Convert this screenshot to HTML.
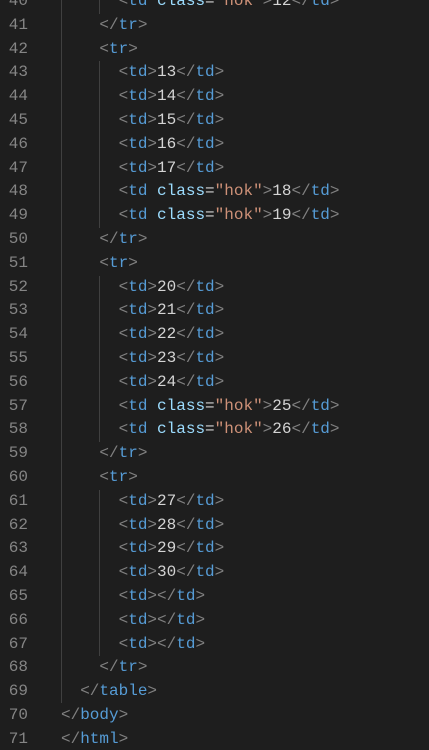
<!DOCTYPE html>
<html><head><meta charset="utf-8"><style>
html,body{margin:0;padding:0;background:#1e1e1e;width:429px;height:750px;overflow:hidden;position:relative}
.l{position:absolute;left:0;height:23.8px;line-height:23.8px;font-family:"Liberation Mono",monospace;font-size:16px;white-space:pre;width:429px}
.n{position:absolute;left:0;width:28px;text-align:right;color:#858585}
.c{position:absolute;left:61px;color:#d4d4d4}
.b{color:#808080}.t{color:#569cd6}.a{color:#9cdcfe}.s{color:#ce9178}
.g{position:absolute;width:1px;background:#404040}
</style></head><body>
<div class="g" style="left:61px;top:0;height:703px"></div>
<div class="g" style="left:99px;top:0;height:13.8px"></div>
<div class="g" style="left:99px;top:61.4px;height:166.6px"></div>
<div class="g" style="left:99px;top:275.6px;height:166.6px"></div>
<div class="g" style="left:99px;top:489.8px;height:166.6px"></div>
<div class="l" style="top:-10px"><span class="n">40</span><span class="c">      <span class="b">&lt;</span><span class="t">td</span> <span class="a">class</span>=<span class="s">"hok"</span><span class="b">&gt;</span>12<span class="b">&lt;/</span><span class="t">td</span><span class="b">&gt;</span></span></div>
<div class="l" style="top:13.8px"><span class="n">41</span><span class="c">    <span class="b">&lt;/</span><span class="t">tr</span><span class="b">&gt;</span></span></div>
<div class="l" style="top:37.6px"><span class="n">42</span><span class="c">    <span class="b">&lt;</span><span class="t">tr</span><span class="b">&gt;</span></span></div>
<div class="l" style="top:61.4px"><span class="n">43</span><span class="c">      <span class="b">&lt;</span><span class="t">td</span><span class="b">&gt;</span>13<span class="b">&lt;/</span><span class="t">td</span><span class="b">&gt;</span></span></div>
<div class="l" style="top:85.2px"><span class="n">44</span><span class="c">      <span class="b">&lt;</span><span class="t">td</span><span class="b">&gt;</span>14<span class="b">&lt;/</span><span class="t">td</span><span class="b">&gt;</span></span></div>
<div class="l" style="top:109px"><span class="n">45</span><span class="c">      <span class="b">&lt;</span><span class="t">td</span><span class="b">&gt;</span>15<span class="b">&lt;/</span><span class="t">td</span><span class="b">&gt;</span></span></div>
<div class="l" style="top:132.8px"><span class="n">46</span><span class="c">      <span class="b">&lt;</span><span class="t">td</span><span class="b">&gt;</span>16<span class="b">&lt;/</span><span class="t">td</span><span class="b">&gt;</span></span></div>
<div class="l" style="top:156.6px"><span class="n">47</span><span class="c">      <span class="b">&lt;</span><span class="t">td</span><span class="b">&gt;</span>17<span class="b">&lt;/</span><span class="t">td</span><span class="b">&gt;</span></span></div>
<div class="l" style="top:180.4px"><span class="n">48</span><span class="c">      <span class="b">&lt;</span><span class="t">td</span> <span class="a">class</span>=<span class="s">"hok"</span><span class="b">&gt;</span>18<span class="b">&lt;/</span><span class="t">td</span><span class="b">&gt;</span></span></div>
<div class="l" style="top:204.2px"><span class="n">49</span><span class="c">      <span class="b">&lt;</span><span class="t">td</span> <span class="a">class</span>=<span class="s">"hok"</span><span class="b">&gt;</span>19<span class="b">&lt;/</span><span class="t">td</span><span class="b">&gt;</span></span></div>
<div class="l" style="top:228px"><span class="n">50</span><span class="c">    <span class="b">&lt;/</span><span class="t">tr</span><span class="b">&gt;</span></span></div>
<div class="l" style="top:251.8px"><span class="n">51</span><span class="c">    <span class="b">&lt;</span><span class="t">tr</span><span class="b">&gt;</span></span></div>
<div class="l" style="top:275.6px"><span class="n">52</span><span class="c">      <span class="b">&lt;</span><span class="t">td</span><span class="b">&gt;</span>20<span class="b">&lt;/</span><span class="t">td</span><span class="b">&gt;</span></span></div>
<div class="l" style="top:299.4px"><span class="n">53</span><span class="c">      <span class="b">&lt;</span><span class="t">td</span><span class="b">&gt;</span>21<span class="b">&lt;/</span><span class="t">td</span><span class="b">&gt;</span></span></div>
<div class="l" style="top:323.2px"><span class="n">54</span><span class="c">      <span class="b">&lt;</span><span class="t">td</span><span class="b">&gt;</span>22<span class="b">&lt;/</span><span class="t">td</span><span class="b">&gt;</span></span></div>
<div class="l" style="top:347px"><span class="n">55</span><span class="c">      <span class="b">&lt;</span><span class="t">td</span><span class="b">&gt;</span>23<span class="b">&lt;/</span><span class="t">td</span><span class="b">&gt;</span></span></div>
<div class="l" style="top:370.8px"><span class="n">56</span><span class="c">      <span class="b">&lt;</span><span class="t">td</span><span class="b">&gt;</span>24<span class="b">&lt;/</span><span class="t">td</span><span class="b">&gt;</span></span></div>
<div class="l" style="top:394.6px"><span class="n">57</span><span class="c">      <span class="b">&lt;</span><span class="t">td</span> <span class="a">class</span>=<span class="s">"hok"</span><span class="b">&gt;</span>25<span class="b">&lt;/</span><span class="t">td</span><span class="b">&gt;</span></span></div>
<div class="l" style="top:418.4px"><span class="n">58</span><span class="c">      <span class="b">&lt;</span><span class="t">td</span> <span class="a">class</span>=<span class="s">"hok"</span><span class="b">&gt;</span>26<span class="b">&lt;/</span><span class="t">td</span><span class="b">&gt;</span></span></div>
<div class="l" style="top:442.2px"><span class="n">59</span><span class="c">    <span class="b">&lt;/</span><span class="t">tr</span><span class="b">&gt;</span></span></div>
<div class="l" style="top:466px"><span class="n">60</span><span class="c">    <span class="b">&lt;</span><span class="t">tr</span><span class="b">&gt;</span></span></div>
<div class="l" style="top:489.8px"><span class="n">61</span><span class="c">      <span class="b">&lt;</span><span class="t">td</span><span class="b">&gt;</span>27<span class="b">&lt;/</span><span class="t">td</span><span class="b">&gt;</span></span></div>
<div class="l" style="top:513.6px"><span class="n">62</span><span class="c">      <span class="b">&lt;</span><span class="t">td</span><span class="b">&gt;</span>28<span class="b">&lt;/</span><span class="t">td</span><span class="b">&gt;</span></span></div>
<div class="l" style="top:537.4px"><span class="n">63</span><span class="c">      <span class="b">&lt;</span><span class="t">td</span><span class="b">&gt;</span>29<span class="b">&lt;/</span><span class="t">td</span><span class="b">&gt;</span></span></div>
<div class="l" style="top:561.2px"><span class="n">64</span><span class="c">      <span class="b">&lt;</span><span class="t">td</span><span class="b">&gt;</span>30<span class="b">&lt;/</span><span class="t">td</span><span class="b">&gt;</span></span></div>
<div class="l" style="top:585px"><span class="n">65</span><span class="c">      <span class="b">&lt;</span><span class="t">td</span><span class="b">&gt;&lt;/</span><span class="t">td</span><span class="b">&gt;</span></span></div>
<div class="l" style="top:608.8px"><span class="n">66</span><span class="c">      <span class="b">&lt;</span><span class="t">td</span><span class="b">&gt;&lt;/</span><span class="t">td</span><span class="b">&gt;</span></span></div>
<div class="l" style="top:632.6px"><span class="n">67</span><span class="c">      <span class="b">&lt;</span><span class="t">td</span><span class="b">&gt;&lt;/</span><span class="t">td</span><span class="b">&gt;</span></span></div>
<div class="l" style="top:656.4px"><span class="n">68</span><span class="c">    <span class="b">&lt;/</span><span class="t">tr</span><span class="b">&gt;</span></span></div>
<div class="l" style="top:680.2px"><span class="n">69</span><span class="c">  <span class="b">&lt;/</span><span class="t">table</span><span class="b">&gt;</span></span></div>
<div class="l" style="top:704px"><span class="n">70</span><span class="c"><span class="b">&lt;/</span><span class="t">body</span><span class="b">&gt;</span></span></div>
<div class="l" style="top:727.8px"><span class="n">71</span><span class="c"><span class="b">&lt;/</span><span class="t">html</span><span class="b">&gt;</span></span></div>
</body></html>
